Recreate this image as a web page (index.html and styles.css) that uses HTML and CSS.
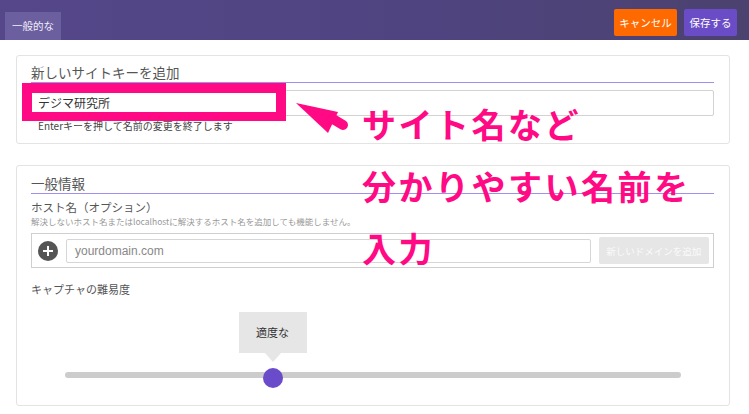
FILE: index.html
```html
<!DOCTYPE html>
<html lang="ja">
<head>
<meta charset="utf-8">
<title>一般的な</title>
<link rel="stylesheet" href="styles.css">
</head>
<body>
<header class="topbar">
  <div class="tab">一般的な</div>
  <div class="actions">
    <button class="btn btn-cancel">キャンセル</button>
    <button class="btn btn-save">保存する</button>
  </div>
</header>
<main class="content">
  <section class="card card-name">
    <h2 class="card-title">新しいサイトキーを追加</h2>
    <div class="field name-field">デジマ研究所</div>
    <p class="hint">Enterキーを押して名前の変更を終了します</p>
  </section>
  <section class="card card-general">
    <h2 class="card-title">一般情報</h2>
    <div class="label">ホスト名（オプション）</div>
    <div class="sublabel">解決しないホスト名またはlocalhostに解決するホスト名を追加しても機能しません。</div>
    <div class="host-row">
      <span class="plus">
        <svg width="20" height="20" viewBox="0 0 20 20"><circle cx="10" cy="10" r="10" fill="#555"/><path d="M10 5v10M5 10h10" stroke="#fff" stroke-width="2"/></svg>
      </span>
      <div class="field host-input">yourdomain.com</div>
      <button class="btn-add">新しいドメインを追加</button>
    </div>
    <div class="label label-captcha">キャプチャの難易度</div>
    <div class="slider">
      <div class="track"></div>
      <div class="knob-wrap" style="left:33.7%">
        <div class="tip">適度な</div>
        <div class="thumb"></div>
      </div>
    </div>
  </section>
</main>
<div class="annot-frame"></div>
<svg class="annot-arrow" width="62" height="42" viewBox="0 0 62 42">
  <path d="M6 5 L48 14 L38 35 Z" fill="#ff0a84"/>
  <path d="M38 18 L53 27" stroke="#ff0a84" stroke-width="10" stroke-linecap="round"/>
</svg>
<div class="annot-text">サイト名など<br>分かりやすい名前を<br>入力</div>
</body>
</html>
```

FILE: styles.css
```css
* { box-sizing: border-box; }
html, body { margin: 0; padding: 0; }
body {
  width: 749px;
  height: 414px;
  overflow: hidden;
  background: #fff;
  font-family: "Noto Sans CJK JP", "Liberation Sans", sans-serif;
  color: #555;
  position: relative;
}
.topbar {
  height: 40px;
  background: linear-gradient(90deg, #55478a 0%, #4f4480 55%, #4b426f 100%);
  display: flex;
  justify-content: space-between;
  align-items: flex-start;
}
.tab {
  margin: 12px 0 0 5px;
  height: 28px;
  padding: 0 7px;
  background: #6c5f9f;
  color: #f0eefa;
  font-size: 10.5px;
  line-height: 28px;
}
.actions {
  display: flex;
  gap: 7px;
  margin: 9px 12px 0 0;
}
.btn {
  height: 27px;
  border: none;
  border-radius: 2px;
  color: #fff;
  font-family: inherit;
  font-size: 10.5px;
  padding: 0;
}
.btn-cancel { width: 63px; background: #ff6a00; }
.btn-save { width: 53px; background: #6a4cc6; }
.content {
  padding: 0 19px 0 16px;
}
.card {
  border: 1px solid #e3e3e3;
  border-radius: 3px;
  padding: 0 15px 0 14px;
}
.card-name { margin-top: 15px; padding-bottom: 10px; }
.card-general { margin-top: 21px; padding-bottom: 18px; }
.card-title {
  margin: 0;
  font-weight: normal;
  font-size: 13.5px;
  color: #555;
  line-height: 20px;
  padding-top: 6px;
  border-bottom: 1px solid #a08ff0;
}
.card-general .card-title { padding-top: 7px; }
.field {
  border: 1px solid #d2d2d2;
  border-radius: 2px;
  font-size: 12px;
  color: #333;
}
.name-field {
  margin-top: 7px;
  height: 26px;
  line-height: 24px;
  padding-left: 6px;
}
.hint {
  margin: 3px 0 0 7px;
  font-size: 10px;
  line-height: 14px;
  color: #444;
}
.label {
  margin-top: 5px;
  font-size: 11.5px;
  line-height: 16px;
  color: #555;
}
.sublabel {
  font-size: 8.5px;
  line-height: 12px;
  color: #999;
}
.host-row {
  margin-top: 6px;
  height: 35px;
  border: 1px solid #cfcfcf;
  display: flex;
  align-items: center;
  padding: 0 4px 0 6px;
}
.plus { width: 20px; height: 20px; display: flex; }
.host-input {
  margin-left: 8px;
  width: 527px;
  height: 24px;
  line-height: 22px;
  padding-left: 8px;
  font-family: "Liberation Sans", sans-serif;
  font-size: 12px;
  color: #888;
  border-color: #d6d6d6;
}
.btn-add {
  margin-left: 8px;
  width: 111px;
  height: 27px;
  border: none;
  border-radius: 2px;
  background: #e6e6e6;
  color: #fbfbfb;
  font-family: inherit;
  font-size: 9.5px;
  padding: 0;
}
.label-captcha { margin-top: 13px; font-size: 11px; }
.slider {
  position: relative;
  height: 90px;
  margin: 0 33px 0 34px;
}
.track {
  position: absolute;
  left: 0; right: 0;
  top: 75px;
  height: 6px;
  border-radius: 3px;
  background: #cccccc;
}
.knob-wrap {
  position: absolute;
  top: 0;
  width: 0;
  height: 90px;
}
.thumb {
  position: absolute;
  left: -10px;
  top: 71px;
  width: 20px;
  height: 20px;
  border-radius: 50%;
  background: #6a4bc9;
}
.tip {
  position: absolute;
  left: -34px;
  top: 15px;
  width: 68px;
  height: 41px;
  background: #e6e6e6;
  color: #333;
  font-size: 11px;
  line-height: 41px;
  text-align: center;
}
.tip::after {
  content: "";
  position: absolute;
  left: 26px;
  top: 41px;
  border-left: 8px solid transparent;
  border-right: 8px solid transparent;
  border-top: 9px solid #e6e6e6;
}
/* annotations layered over the screenshot */
.annot-frame {
  position: absolute;
  left: 22px;
  top: 83px;
  width: 264px;
  height: 38px;
  border: 10px solid #ff0a84;
  border-bottom-width: 9px;
}
.annot-arrow {
  position: absolute;
  left: 290px;
  top: 98px;
}
.annot-text {
  position: absolute;
  left: 362px;
  top: 93px;
  font-size: 34px;
  line-height: 62px;
  font-weight: bold;
  color: #ff0a84;
  letter-spacing: 2.5px;
  white-space: nowrap;
}
```
